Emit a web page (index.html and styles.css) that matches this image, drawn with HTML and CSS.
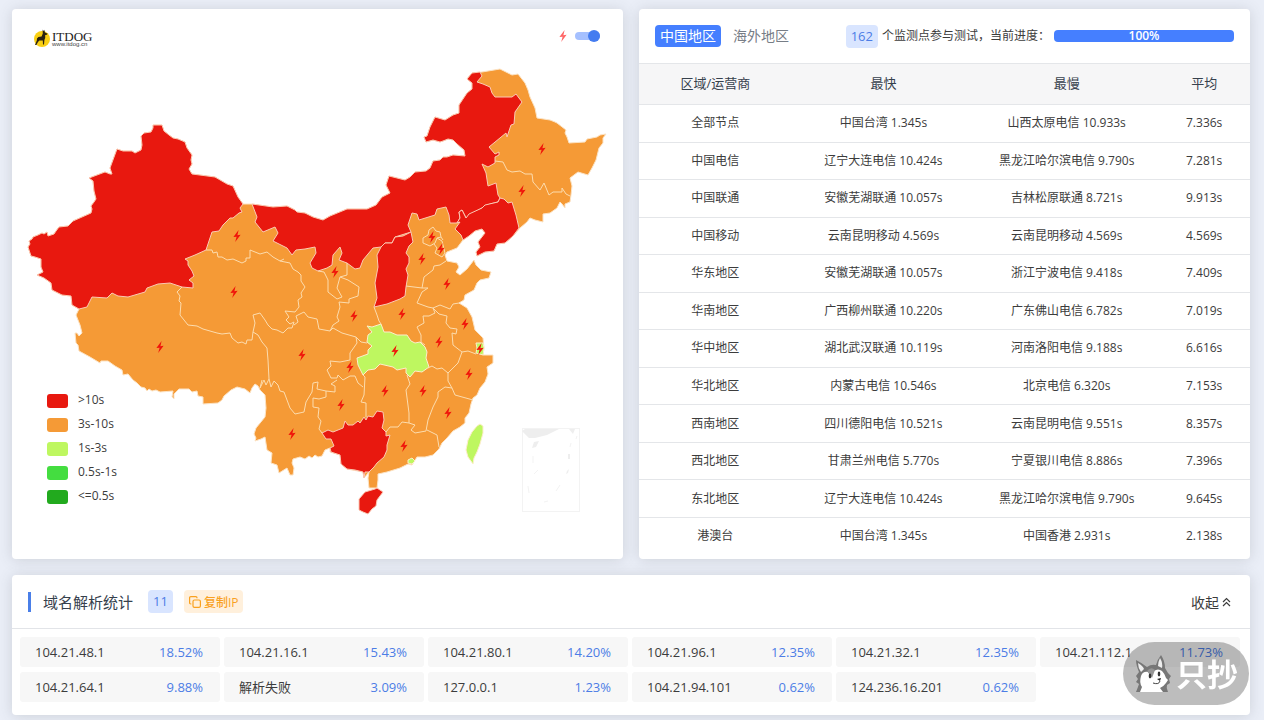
FILE: index.html
```html
<!DOCTYPE html>
<html lang="zh-CN">
<head>
  <meta charset="utf-8">
  <title>ITDOG</title>
  <link rel="stylesheet" href="styles.css">
</head>
<body>

  <div class="top-row">

    <!-- MAP CARD -->
    <section class="card map-card">
      <div class="map-head">
        <svg class="logo" width="60" height="22" viewBox="0 0 60 22">
          <circle cx="9" cy="11" r="8" fill="#f9cf13"/>
          <path d="M9.6 1.6 L10.6 3 L11.2 1.8 L12 4.4 L14.6 5.8 L14 6.8 L12.2 7 L12.2 10 L11.4 12 L11 16.4 L10 16.6 L9.8 12.6 L6.4 12.4 L5 14 L3.4 17 L2 17 L3.8 12.6 L4 10.4 L5.4 9 L8.6 8.4 L9.8 5.6 Z" fill="#2a2210"/>
          <text x="19" y="13" class="logo-name">ITDOG</text>
          <text x="19" y="18" class="logo-url">www.itdog.cn</text>
        </svg>
        <label class="switch">
          <svg width="8" height="12" viewBox="-4 -6 8 12"><use href="#bolt" class="bolt-soft"/></svg>
          <input type="checkbox" checked aria-label="bolt">
        </label>
      </div>

      <svg class="map" viewBox="12 62 611 497">
        <defs>
          <path id="bolt" d="M1.6 -6 L-3.6 1 L-0.4 0.8 L-1.8 6 L3.6 -1.2 L0.4 -0.8 Z"/>
        </defs>

        <!-- mainland -->
        <path class="orange coast" d="M28 247 L30 244 L29 241 L32 239 L33 237 L38 235 L42 233 L44 234 L47 232 L48 236 L54 234 L56 231 L59 227 L68 226 L73 221 L91 213 L92 209 L91 206 L94 202 L96 199 L94 191 L93 181 L89 178 L105 172 L110 174 L112 174 L110 168 L117 149 L123 151 L132 151 L135 153 L141 150 L142 145 L141 136 L144 133 L151 132 L153 128 L153 125 L162 125 L164 131 L169 135 L173 138 L178 139 L185 142 L187 148 L192 155 L191 160 L192 164 L189 169 L192 174 L215 177 L227 184 L233 186 L238 197 L243 204 L252 204
          L273 207 L287 206 L295 210 L297 212 L305 213 L313 217 L323 220 L330 216 L347 209 L367 209 L376 205 L382 197 L390 193 L386 185 L389 176 L405 180 L410 177 L415 172 L426 171 L430 168 L433 161 L440 160 L443 157 L447 157 L453 155 L465 156 L464 150 L457 144 L453 140 L448 139 L443 141 L440 142 L433 140 L426 142 L424 137 L427 136 L430 127 L435 117 L445 120 L453 115 L459 113 L459 105 L463 99 L467 93 L472 89 L472 83 L467 79 L472 73 L482 72
          L500 69 L512 75 L518 74 L525 83 L528 90 L530 97 L535 108 L537 118 L550 120 L555 122 L557 123 L566 130 L565 133 L567 137 L569 143 L585 142 L587 139 L597 137 L600 135 L606 134 L603 138 L603 143 L599 148 L596 160 L592 168 L588 175 L578 172 L570 178 L572 186 L571 195 L570 202 L565 204 L565 208 L562 204 L560 202 L557 208 L550 213 L543 214 L543 222 L535 220 L530 218 L527 222 L520 228
          L513 236 L505 243 L497 244 L494 251 L485 252 L477 256 L476 252 L480 247 L478 242 L485 233 L482 229 L475 231 L469 236 L463 240 L457 248 L447 252 L445 255 L447 261 L457 263 L459 267 L456 272 L460 275 L467 269 L474 260 L476 265 L481 270 L491 272 L489 278 L480 280 L477 283 L474 290 L465 295 L464 300 L459 303 L467 308 L472 317 L475 330 L483 338 L484 348 L483 355 L493 355 L493 363 L487 367
          L488 374 L485 382 L480 388 L477 395 L473 398 L471 404 L469 413 L465 418 L465 423 L460 427 L453 431 L447 438 L442 443 L439 449 L433 455 L425 457 L417 457 L412 465 L408 464 L400 468 L387 472 L378 474 L378 480 L377 488 L369 488 L368 478 L369 472
          L364 478 L363 472 L347 469 L341 464 L340 455 L330 452 L330 448 L325 450 L322 456 L318 457 L315 455 L312 458 L309 456 L305 459 L300 457 L293 459 L292 463 L294 468 L293 475 L290 475 L287 468 L279 473 L277 465 L271 463 L272 453 L267 450 L265 437 L261 439 L255 441 L256 438 L254 434 L256 428 L265 417 L266 408 L265 395 L260 390
          L258 386 L255 384 L252 388 L250 393 L245 389 L237 387 L231 390 L224 396 L222 400 L218 403 L203 404 L203 397 L198 396 L197 391 L192 392 L189 389 L179 389 L174 394 L174 399 L172 397 L173 391 L160 392 L156 390 L152 391 L149 389 L147 391 L145 388 L141 387 L137 383 L133 380 L128 374 L123 375 L122 370 L115 366 L108 361 L101 361 L100 363 L90 357 L79 351 L78 345 L76 343 L75 333 L77 333 L79 336 L82 333 L80 325 L76 315 L79 309
          L72 305 L71 296 L62 295 L52 290 L51 283 L44 278 L37 275 L43 272 L41 267 L41 259 L35 257 L31 256 Z"/>

        <!-- Xinjiang -->
        <path class="red" d="M28 247 L30 244 L29 241 L32 239 L33 237 L38 235 L42 233 L44 234 L47 232 L48 236 L54 234 L56 231 L59 227 L68 226 L73 221 L91 213 L92 209 L91 206 L94 202 L96 199 L94 191 L93 181 L89 178 L105 172 L110 174 L112 174 L110 168 L117 149 L123 151 L132 151 L135 153 L141 150 L142 145 L141 136 L144 133 L151 132 L153 128 L153 125 L162 125 L164 131 L169 135 L173 138 L178 139 L185 142 L187 148 L192 155 L191 160 L192 164 L189 169 L192 174 L215 177 L227 184 L233 186 L238 197 L243 204 L240 208 L242 212 L239 213 L233 218 L230 218 L223 225 L219 231 L212 232 L206 250 L195 255 L185 259 L188 261 L188 265 L192 271 L194 276 L189 280 L193 283 L193 288 L182 287 L170 283 L158 284 L147 288 L145 292 L128 297 L118 296 L112 293 L107 298 L92 297 L87 307 L79 309 L72 305 L71 296 L62 295 L52 290 L51 283 L44 278 L37 275 L43 272 L41 267 L41 259 L35 257 L31 256 Z"/>
        <!-- Inner Mongolia -->
        <path class="red" d="M252 204 L273 207 L287 206 L295 210 L297 212 L305 213 L313 217 L323 220 L330 216 L347 209 L367 209 L376 205 L382 197 L390 193 L386 185 L389 176 L405 180 L410 177 L415 172 L426 171 L430 168 L433 161 L440 160 L443 157 L447 157 L453 155 L465 156 L464 150 L457 144 L453 140 L448 139 L443 141 L440 142 L433 140 L426 142 L424 137 L427 136 L430 127 L435 117 L445 120 L453 115 L459 113 L459 105 L463 99 L467 93 L472 89 L472 83 L467 79 L472 73 L480 72 L482 76 L477 82 L483 84 L490 87 L492 93 L495 97 L503 97 L512 97 L516 94 L522 102 L515 112 L514 124 L511 125 L507 137 L506 133 L489 147 L495 154 L499 152 L499 155 L495 157 L495 163 L488 167 L482 164 L486 173 L488 186 L496 183 L498 195 L500 198 L498 202 L490 204 L482 208 L473 213 L466 218 L462 210 L459 212 L460 218 L457 223 L450 223 L449 215 L446 207 L437 209 L435 215 L419 220 L417 214 L412 213 L408 225 L411 232 L395 237 L392 243 L385 243 L381 247 L373 248 L363 260 L360 268 L355 269 L347 263 L339 260 L342 253 L340 247 L333 255 L332 265 L327 268 L318 271 L312 268 L310 263 L316 253 L315 247 L305 249 L296 250 L292 255 L287 248 L273 241 L278 233 L275 227 L263 232 L255 222 L257 217 Z"/>
        <!-- Liaoning -->
        <path class="red" d="M500 198 L504 199 L508 203 L512 202 L516 215 L519 228 L513 236 L505 243 L497 244 L494 251 L485 252 L477 256 L476 252 L480 247 L478 242 L485 233 L482 229 L475 231 L469 236 L463 240 L461 235 L455 229 L460 222 L457 223 L460 218 L459 212 L462 210 L466 218 L469 214 L482 208 L485 205 L498 202 Z"/>
        <!-- Shanxi -->
        <path class="red" d="M381 247 L385 243 L392 243 L395 237 L403 236 L411 232 L413 242 L409 246 L406 253 L409 257 L409 263 L406 269 L408 275 L406 287 L405 296 L400 299 L387 304 L374 307 L377 298 L375 283 L378 267 L377 255 Z"/>
        <!-- Guangxi -->
        <path class="red" d="M322 433 L328 430 L333 432 L343 428 L345 421 L348 425 L353 425 L358 421 L360 423 L364 417 L366 420 L368 416 L373 417 L377 411 L383 412 L384 420 L382 428 L386 432 L386 436 L390 435 L387 445 L387 450 L384 457 L377 463 L374 467 L369 472 L365 472 L364 478 L363 472 L355 470 L347 469 L341 464 L340 455 L331 452 L330 448 L334 446 L331 439 L326 439 Z"/>
        <!-- Hainan -->
        <path class="red" d="M365 492 L375 489 L377 488 L383 492 L377 500 L376 506 L372 509 L368 514 L363 512 L359 510 L359 499 Z"/>
        <!-- Hubei -->
        <path class="green" d="M367 326 L372 327 L381 324 L384 332 L390 332 L397 335 L407 335 L411 341 L415 343 L420 342 L425 347 L427 352 L426 358 L429 367 L422 372 L415 371 L410 377 L406 373 L406 368 L397 370 L393 367 L380 364 L375 369 L368 370 L363 375 L358 365 L357 358 L368 354 L368 350 L372 346 L367 342 L368 335 L372 332 Z"/>
        <!-- Shanghai, Hong Kong, Taiwan -->
        <path class="green" d="M476 343 L483 343 L484 348 L483 355 L476 353 L477 348 Z"/>
        <path class="green" d="M408 460 L412 458 L415 461 L412 464 L408 463 Z"/>
        <path class="green" d="M477 426 L480 424 L483 426 L483 433 L480 444 L477 452 L474 458 L473 464 L468 457 L466 450 L468 440 L472 432 Z"/>

        <!-- province borders -->
        <g class="border">
          <path d="M206 250 L212 250 L213 253 L217 252 L218 257 L222 257 L227 260 L233 259 L242 263 L246 261 L246 258 L250 258 L250 250 L260 254 L267 252 L273 257 L280 261 L290 263 L293 269 L298 272 L301 275 L301 281 L305 287 L301 293 L302 297 L298 300 L299 307 L295 312 L285 311 L289 317 L286 320 L290 324 L294 322 L292 328 L288 328 L283 333 L277 330 L272 329 L268 325 L265 320 L260 313 L253 315 L255 323 L253 332 L252 340 L247 340 L246 344 L242 342 L238 343 L232 338 L230 333 L222 334 L217 333 L203 329 L197 326 L188 325 L180 315 L181 303 L179 301 L180 296 L177 292 L182 287"/>
          <path d="M280 261 L284 259 M253 332 L258 335 L262 342 L267 348 L268 360 L269 379 L266 385 L264 380 L260 388 L262 380"/>
          <path d="M294 325 L298 322 L296 316 L304 312 L308 317 L317 319 L319 329 L330 331 L333 328 L342 333 L356 337 L357 343 L350 353 L350 360 L340 362 L330 361 L331 366 L327 370 L331 378 L337 378 L338 375 L343 380 L350 376 L355 376 L358 383 L363 387"/>
          <path d="M269 379 L271 387 L274 381 L278 385 L280 391 L284 392 L290 408 L295 414 L304 412 L306 402 L312 392 L313 383 L318 382 L317 389 L326 391 L326 397 L319 399 L313 398 L313 407 L319 408 L318 417 L321 421 L319 429 L322 433"/>
          <path d="M326 391 L335 392 L335 386 L331 384 L337 380 M356 337 L361 342 L367 343 M363 375 L365 377 L364 395 L361 402 L366 403 L366 417"/>
          <path d="M318 271 L324 272 L328 280 L328 292 L337 299 L342 297 L337 288 L340 277 L347 275 L347 263 M340 277 L348 280 L359 287 L358 296 L349 299 L349 303 L339 302 L340 307 L337 317 L339 321 L333 325 L330 331"/>
          <path d="M374 307 L377 315 L379 321 L381 324 M406 286 L422 288 L424 277 L433 270 L434 266 L440 265 L446 261"/>
          <path d="M422 288 L428 288 L422 292 L417 303 L428 307 L433 308 L440 305 L450 309 L453 304 L459 303 M433 308 L435 313 L429 316 L423 316 L424 323 L417 327 L421 335 L421 342 L425 345"/>
          <path d="M433 308 L439 314 L447 316 L446 323 L450 328 L457 329 L456 334 L452 333 L453 345 L462 352 L468 351 L476 354 M462 352 L458 363 L448 373 L442 368 L437 369 L432 366 L428 368"/>
          <path d="M448 373 L448 381 L452 388 L445 387 L438 392 L438 397 L433 407 L428 420 L426 431 L415 433 L411 430 L415 425 L409 423 L402 422 L398 427 L390 427 L386 432 M452 388 L455 395 L473 400"/>
          <path d="M407 375 L410 384 L406 390 L409 413 L409 423 M427 430 L437 435 L439 447"/>
          <path d="M495 161 L503 162 L507 170 L512 172 L520 171 L525 174 L532 174 L533 182 L540 190 L544 183 L549 195 L553 192 L562 192 L562 188 L566 194 L570 196"/>
          <path d="M423 243 L423 238 L428 235 L429 230 L433 227 L436 231 L440 232 L441 237 L437 238 L435 243 L430 246 Z M437 238 L442 241 L445 253 L442 257 L435 253 L437 248 L434 244 M441 237 L443 240"/>
        </g>

        <!-- South China Sea inset -->
        <g class="inset">
          <rect x="522.5" y="428.5" width="57" height="83"/>
          <path d="M522 431 L525 429 L559 429 L547 435 L535 438 L529 438 Z M534 442 L539 441 L536 447 L532 448 Z M569 429 L575 429 L573 434 Z M568 454 L570 454 L570 459 L568 459 Z M567 471 L569 469 L568 473 L566 474 Z"/>
          <path d="M533 456 L533 463 M534 474 L538 470 M528 486 L529 493 M556 491 L560 485 M544 502 L548 501 M570 447 L571 443 M576 439 L577 436" class="inset-line"/>
        </g>

        <g class="bolts">
          <use href="#bolt" x="542" y="149"/>
          <use href="#bolt" x="522" y="191"/>
          <use href="#bolt" x="432" y="237"/>
          <use href="#bolt" x="441" y="249"/>
          <use href="#bolt" x="422" y="259"/>
          <use href="#bolt" x="237" y="236"/>
          <use href="#bolt" x="335" y="272"/>
          <use href="#bolt" x="234" y="292"/>
          <use href="#bolt" x="447" y="284"/>
          <use href="#bolt" x="354" y="316"/>
          <use href="#bolt" x="402" y="314"/>
          <use href="#bolt" x="465" y="324"/>
          <use href="#bolt" x="160" y="347"/>
          <use href="#bolt" x="302" y="355"/>
          <use href="#bolt" x="350" y="367"/>
          <use href="#bolt" x="395" y="351"/>
          <use href="#bolt" x="439" y="342"/>
          <use href="#bolt" x="480" y="349"/>
          <use href="#bolt" x="469" y="374"/>
          <use href="#bolt" x="385" y="391"/>
          <use href="#bolt" x="423" y="391"/>
          <use href="#bolt" x="341" y="405"/>
          <use href="#bolt" x="448" y="413"/>
          <use href="#bolt" x="292" y="434"/>
          <use href="#bolt" x="404" y="446"/>
        </g>
      </svg>

      <ul class="legend">
        <li><i class="swatch s1"></i>&gt;10s</li>
        <li><i class="swatch s2"></i>3s-10s</li>
        <li><i class="swatch s3"></i>1s-3s</li>
        <li><i class="swatch s4"></i>0.5s-1s</li>
        <li><i class="swatch s5"></i>&lt;=0.5s</li>
      </ul>
    </section>

    <!-- RESULT TABLE CARD -->
    <section class="card">
      <div class="result-head">
        <button class="tab active">中国地区</button>
        <button class="tab">海外地区</button>
        <div class="progress-info">
          <span class="badge">162</span>
          <span>个监测点参与测试，当前进度：</span>
          <div class="progress" role="progressbar" aria-valuenow="100">100%</div>
        </div>
      </div>
      <table>
        <thead>
          <tr><th>区域/运营商</th><th>最快</th><th>最慢</th><th>平均</th></tr>
        </thead>
        <tbody>
          <tr><td>全部节点</td><td>中国台湾 1.345s</td><td>山西太原电信 10.933s</td><td>7.336s</td></tr>
          <tr><td>中国电信</td><td>辽宁大连电信 10.424s</td><td>黑龙江哈尔滨电信 9.790s</td><td>7.281s</td></tr>
          <tr><td>中国联通</td><td>安徽芜湖联通 10.057s</td><td>吉林松原联通 8.721s</td><td>9.913s</td></tr>
          <tr><td>中国移动</td><td>云南昆明移动 4.569s</td><td>云南昆明移动 4.569s</td><td>4.569s</td></tr>
          <tr><td>华东地区</td><td>安徽芜湖联通 10.057s</td><td>浙江宁波电信 9.418s</td><td>7.409s</td></tr>
          <tr><td>华南地区</td><td>广西柳州联通 10.220s</td><td>广东佛山电信 6.782s</td><td>7.019s</td></tr>
          <tr><td>华中地区</td><td>湖北武汉联通 10.119s</td><td>河南洛阳电信 9.188s</td><td>6.616s</td></tr>
          <tr><td>华北地区</td><td>内蒙古电信 10.546s</td><td>北京电信 6.320s</td><td>7.153s</td></tr>
          <tr><td>西南地区</td><td>四川德阳电信 10.521s</td><td>云南昆明电信 9.551s</td><td>8.357s</td></tr>
          <tr><td>西北地区</td><td>甘肃兰州电信 5.770s</td><td>宁夏银川电信 8.886s</td><td>7.396s</td></tr>
          <tr><td>东北地区</td><td>辽宁大连电信 10.424s</td><td>黑龙江哈尔滨电信 9.790s</td><td>9.645s</td></tr>
          <tr><td>港澳台</td><td>中国台湾 1.345s</td><td>中国香港 2.931s</td><td>2.138s</td></tr>
        </tbody>
      </table>
    </section>
  </div>

  <!-- DNS CARD -->
  <section class="card">
    <div class="dns-head">
      <h2>域名解析统计</h2>
      <span class="badge">11</span>
      <button class="copy">
        <svg width="12" height="12" viewBox="0 0 12 12" fill="none" stroke="currentColor" stroke-width="1.2">
          <rect x="4" y="4" width="7.4" height="7.4" rx="1.4"/>
          <path d="M2.4 8 H1.8 Q0.6 8 0.6 6.8 V1.8 Q0.6 0.6 1.8 0.6 H6.8 Q8 0.6 8 1.8 V2.2"/>
        </svg>
        复制IP
      </button>
      <button class="collapse">
        收起
        <svg width="9" height="10" viewBox="0 0 9 10" fill="none" stroke="currentColor" stroke-width="1.2">
          <path d="M1 5 L4.5 1.5 L8 5 M1 9 L4.5 5.5 L8 9"/>
        </svg>
      </button>
    </div>
    <ul class="ip-list">
      <li>104.21.48.1<b>18.52%</b></li>
      <li>104.21.16.1<b>15.43%</b></li>
      <li>104.21.80.1<b>14.20%</b></li>
      <li>104.21.96.1<b>12.35%</b></li>
      <li>104.21.32.1<b>12.35%</b></li>
      <li>104.21.112.1<b>11.73%</b></li>
      <li>104.21.64.1<b>9.88%</b></li>
      <li>解析失败<b>3.09%</b></li>
      <li>127.0.0.1<b>1.23%</b></li>
      <li>104.21.94.101<b>0.62%</b></li>
      <li>124.236.16.201<b>0.62%</b></li>
    </ul>
  </section>

  <!-- floating mark in the corner -->
  <div class="mark">
    <svg width="40" height="40" viewBox="0 0 40 40">
      <path d="M3 6 Q9 9 14 13 Q18 10 23 11 Q24 6 28 1 Q32 7 32 14 L35 19 L38 22 L36 25 L37 29 L34 31 Q33 34 35 38 H3 Q5 33 6 30 L3 28 L5 25 L3 22 L6 18 Q3 11 3 6 Z" fill="#777"/>
      <path d="M5 9 Q10 12 11 15 L8 18 Q5 14 5 9 Z M27 4 Q30 9 29 14 L25 12 Q25 8 27 4 Z" fill="#eee"/>
      <path d="M8 22 Q10 17 15 18 L19 22 L21 17 Q25 14 29 17 Q32 20 33 24 L35 26 L33 29 Q31 32 27 34 L30 38 H7 L9 33 Q6 29 8 22 Z" fill="#fff"/>
      <path d="M14 17 L19 24 L22 16 Q18 12 14 17 Z" fill="#959595"/>
      <ellipse cx="17" cy="22" rx="1.3" ry="2.4" fill="#333"/>
      <ellipse cx="26" cy="20" rx="1.3" ry="2.4" fill="#333"/>
      <path d="M24 25 L28 24 L27 27 Z" fill="#222"/>
      <path d="M27 27 Q26 31 20 29" fill="none" stroke="#444" stroke-width="1"/>
    </svg>
    <span>只抄</span>
  </div>

</body>
</html>
```

FILE: styles.css
```css
* {
  box-sizing: border-box;
}
body {
  margin: 0;
  padding: 9px 14px 5px 12px;
  background-color: #eaeef7;
  color: #3c3c3c;
  font-family: "Open Sans", "Noto Sans CJK SC", sans-serif;
  font-size: 12px;
  line-height: 18px;
}
button {
  border: none;
  padding: 0;
  background: none;
  color: inherit;
  font-family: inherit;
  cursor: pointer;
}
ul {
  list-style: none;
  margin: 0;
  padding: 0;
}
.top-row {
  display: grid;
  grid-template-columns: 1fr 1fr;
  gap: 16px;
  margin-bottom: 16px;
}
.card {
  background-color: #fff;
  border-radius: 4px;
  box-shadow: 0 1px 14px rgba(70, 75, 85, 0.18);
}

/* Map */
.map-card {
  position: relative;
}
.map-head {
  display: flex;
  justify-content: space-between;
  align-items: center;
  height: 53px;
  padding: 0 23px 0 21px;
}
.logo {
  margin-top: 6px;
}
.logo-name {
  font-family: "Liberation Serif", serif;
  font-size: 13px;
  fill: #222;
}
.logo-url {
  font-family: "Liberation Sans", sans-serif;
  font-size: 6px;
  fill: #444;
}
.switch {
  display: flex;
  align-items: center;
  gap: 8px;
}
.bolt-soft {
  fill: #f66;
}
.switch input {
  appearance: none;
  position: relative;
  width: 25px;
  height: 8px;
  margin: 0;
  border-radius: 4px;
  background-color: #a5c0ff;
}
.switch input::after {
  content: "";
  position: absolute;
  top: -2px;
  right: 0;
  width: 12px;
  height: 12px;
  border-radius: 50%;
  background-color: #447cf0;
}
.map {
  display: block;
  width: 100%;
  height: auto;
}
.orange { fill: #f59a36; }
.red { fill: #e8180f; stroke: #fbc9b4; stroke-width: 1; }
.green { fill: #bef760; stroke: #fdeecb; stroke-width: 1; }
.coast { stroke: #fce3c4; stroke-width: 1; }
.border {
  fill: none;
  stroke: #fcdcae;
  stroke-width: 1;
  stroke-linejoin: round;
}
.bolts { fill: #f0140a; }
.inset { fill: #eee; }
.inset rect { fill: none; stroke: #f3f3f3; }
.inset-line { fill: none; stroke: #f3f3f3; }

.legend {
  position: absolute;
  left: 35px;
  bottom: 51px;
}
.legend li {
  display: flex;
  align-items: center;
  gap: 10px;
  height: 24px;
}
.swatch {
  width: 21px;
  height: 14px;
  margin-top: 2px;
  border-radius: 3px;
}
.s1 { background-color: #e8180f; }
.s2 { background-color: #f59a36; }
.s3 { background-color: #bef760; }
.s4 { background-color: #44dd40; }
.s5 { background-color: #22aa1e; }

/* Result table */
.result-head {
  display: flex;
  align-items: center;
  gap: 7px;
  height: 54px;
  padding: 0 16px;
}
.tab {
  height: 22px;
  padding: 0 5px;
  border-radius: 4px;
  color: #777d86;
  font-size: 14px;
  line-height: 22px;
}
.tab.active {
  background-color: #457fff;
  color: #fff;
}
.progress-info {
  display: flex;
  align-items: center;
  gap: 4px;
  margin-left: auto;
}
.badge {
  padding: 0 5px;
  border-radius: 4px;
  background-color: #d9e5ff;
  color: #4c7de6;
  font-size: 13px;
  line-height: 23px;
}
.progress {
  width: 180px;
  height: 12px;
  border-radius: 4px;
  background-color: #457fff;
  color: #fff;
  font-weight: 600;
  line-height: 12px;
  text-align: center;
}
table {
  width: 100%;
  height: 491px;
  border-collapse: collapse;
  table-layout: fixed;
  text-align: center;
}
th {
  width: 30%;
  height: 41px;
  padding: 0 0 2px;
  border-top: 1px solid #e4e6e9;
  background-color: #f6f6f7;
  color: #36414d;
  font-size: 13px;
  font-weight: 400;
}
th:first-child {
  width: 25%;
}
th:last-child {
  width: 15%;
}
td {
  padding: 0;
  border-top: 1px solid #e4e6e9;
}

/* DNS statistics */
.dns-head {
  display: flex;
  align-items: center;
  height: 54px;
  padding: 0 19px 0 16px;
  border-bottom: 1px solid #e2e4e8;
}
.dns-head h2 {
  margin: 0 15px 0 0;
  padding-left: 12px;
  border-left: 3px solid #4a7fe8;
  color: #36414d;
  font-size: 15px;
  font-weight: 400;
  line-height: 20px;
}
.copy {
  display: flex;
  align-items: center;
  gap: 3px;
  height: 23px;
  margin-left: 11px;
  padding: 0 5px;
  border-radius: 4px;
  background-color: #fff0dc;
  color: #f9a11f;
  font-size: 12px;
  font-weight: 500;
}
.collapse {
  display: flex;
  align-items: center;
  gap: 3px;
  margin-left: auto;
  font-size: 14px;
}
.ip-list {
  display: grid;
  grid-template-columns: repeat(6, 1fr);
  gap: 5px 4px;
  padding: 8px 10px 13px 8px;
}
.ip-list li {
  display: flex;
  justify-content: space-between;
  padding: 0 17px 0 15px;
  border-radius: 3px;
  background-color: #f7f7f7;
  font-size: 13px;
  line-height: 30px;
}
.ip-list b {
  color: #4c7de6;
  font-weight: 400;
}

/* Corner mark */
.mark {
  position: fixed;
  right: 15px;
  bottom: 15px;
  display: flex;
  align-items: center;
  gap: 3px;
  height: 63px;
  padding: 0 11px 0 10px;
  border-radius: 32px;
  background-color: rgba(0, 0, 0, 0.26);
  color: #fff;
  font-size: 31px;
  font-weight: 700;
  line-height: 40px;
}
```
